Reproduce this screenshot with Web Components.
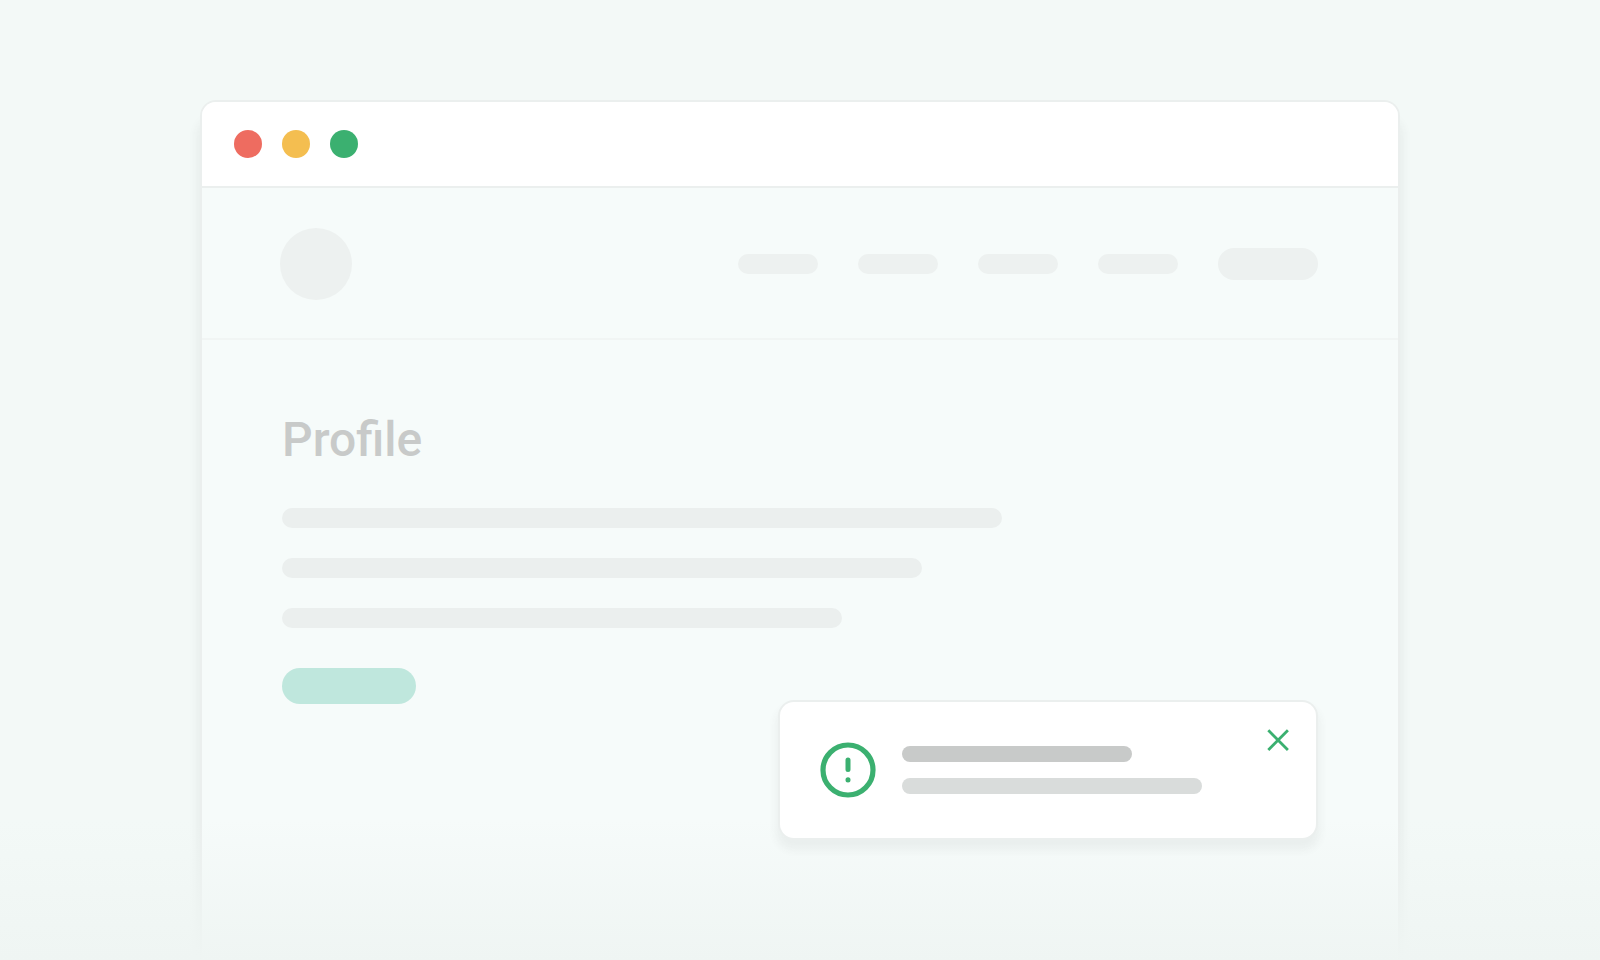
<!DOCTYPE html>
<html lang="en">
<head>
<meta charset="utf-8">
<meta name="viewport" content="width=device-width, initial-scale=1">
<title>Profile</title>
<style>
    :root {
        --page: #f3f9f7;
        --surface: #f6fbfa;
        --line: #ebefee;
        --muted: #c8cac9;
        --muted-light: #d9dcdb;
        --green: #3bb070;
        --mint: #bfe7dd;
    }

    body {
        margin: 0;
        background: var(--page);
        font-family: Roboto, "Liberation Sans", sans-serif;
    }
</style>
</head>
<body>
<profile-scene>
    <browser-window>
        <site-header></site-header>
        <profile-page>Profile</profile-page>
        <alert-toast slot="toast"></alert-toast>
    </browser-window>
</profile-scene>

<script>
/**
 * SkeletonBar: rounded placeholder, sized by attributes
 */
class SkeletonBar extends HTMLElement {
    constructor() {
        super();
        this.attachShadow({ mode: 'open' });
    }

    connectedCallback() {
        const width = this.getAttribute('width');
        const height = this.getAttribute('height') || 20;
        this.shadowRoot.innerHTML = `
        <style>
            :host {
                display: block;
                box-sizing: border-box;
                width: ${width}px;
                max-width: 100%;
                height: ${height}px;
                border-radius: 36px;
                background: var(--bar-color, var(--line));
            }
        </style>
        `;
    }
}
customElements.define('skeleton-bar', SkeletonBar);

/**
 * ProfileScene: backdrop with the fade along the bottom edge
 */
class ProfileScene extends HTMLElement {
    constructor() {
        super();
        this.attachShadow({ mode: 'open' });
    }

    connectedCallback() {
        this.shadowRoot.innerHTML = `
        <style>
            :host {
                display: flex;
                position: relative;
                box-sizing: border-box;
                min-height: 100vh;
                padding: 100px 12.5% 0;
                overflow: hidden;
            }

            .fade {
                position: absolute;
                inset: auto 0 0 0;
                height: 140px;
                background: linear-gradient(rgba(239, 245, 243, 0), #eff5f3);
                pointer-events: none;
            }
        </style>
        <slot></slot>
        <div class="fade"></div>
        `;
    }
}
customElements.define('profile-scene', ProfileScene);

/**
 * BrowserWindow: title bar with the three dots, content below
 */
class BrowserWindow extends HTMLElement {
    constructor() {
        super();
        this.attachShadow({ mode: 'open' });
    }

    connectedCallback() {
        this.shadowRoot.innerHTML = `
        <style>
            :host {
                display: flex;
                flex: 1;
                flex-direction: column;
                position: relative;
                box-sizing: border-box;
                min-width: 0;
                border: 2px solid var(--line);
                border-bottom: 0;
                border-radius: 16px 16px 0 0;
                background: var(--surface);
                box-shadow: 0 20px 8px 4px rgba(60, 60, 60, 0.05);
            }

            .bar {
                display: flex;
                align-items: center;
                gap: 20px;
                height: 84px;
                padding: 0 32px;
                border-bottom: 2px solid var(--line);
                border-radius: 14px 14px 0 0;
                background: #fff;
            }

            .dot {
                width: 28px;
                height: 28px;
                border-radius: 50%;
            }

            .red { background: #ee6c60; }
            .yellow { background: #f4be50; }
            .green { background: var(--green); }

            .toast {
                position: absolute;
                right: 82px;
                bottom: 122px;
                z-index: 2;
            }
        </style>
        <div class="bar">
            <div class="dot red"></div>
            <div class="dot yellow"></div>
            <div class="dot green"></div>
        </div>
        <slot></slot>
        <div class="toast"><slot name="toast"></slot></div>
        `;
    }
}
customElements.define('browser-window', BrowserWindow);

/**
 * SiteHeader: avatar on the left, nav placeholders on the right
 */
class SiteHeader extends HTMLElement {
    constructor() {
        super();
        this.attachShadow({ mode: 'open' });
    }

    connectedCallback() {
        this.shadowRoot.innerHTML = `
        <style>
            :host {
                display: flex;
                align-items: center;
                justify-content: space-between;
                padding: 40px 80px 38px 78px;
                border-bottom: 2px solid #f1f5f4;
            }

            .avatar {
                width: 72px;
                height: 72px;
                border-radius: 50%;
                background: #edf1f0;
            }

            nav {
                --bar-color: #edf1f0;
                display: flex;
                align-items: center;
                gap: 40px;
            }
        </style>
        <div class="avatar"></div>
        <nav>
            <skeleton-bar width="80"></skeleton-bar>
            <skeleton-bar width="80"></skeleton-bar>
            <skeleton-bar width="80"></skeleton-bar>
            <skeleton-bar width="80"></skeleton-bar>
            <skeleton-bar width="100" height="32"></skeleton-bar>
        </nav>
        `;
    }
}
customElements.define('site-header', SiteHeader);

/**
 * ProfilePage: heading, lines of copy and the main button
 */
class ProfilePage extends HTMLElement {
    constructor() {
        super();
        this.attachShadow({ mode: 'open' });
    }

    connectedCallback() {
        this.shadowRoot.innerHTML = `
        <style>
            :host {
                display: block;
                padding: 72px 80px 240px;
            }

            h1 {
                margin: 0 0 40px;
                color: var(--muted);
                font-size: 48px;
                font-weight: 500;
                line-height: 56px;
            }

            .lines {
                display: grid;
                gap: 30px;
                margin-bottom: 40px;
            }

            button {
                display: block;
                width: 134px;
                height: 36px;
                border: 0;
                border-radius: 18px;
                background: var(--mint);
                cursor: pointer;
            }
        </style>
        <h1><slot></slot></h1>
        <div class="lines">
            <skeleton-bar width="720"></skeleton-bar>
            <skeleton-bar width="640"></skeleton-bar>
            <skeleton-bar width="560"></skeleton-bar>
        </div>
        <button type="button" aria-label="Save"></button>
        `;
    }
}
customElements.define('profile-page', ProfilePage);

/**
 * AlertToast: notice with an icon and a close button
 */
class AlertToast extends HTMLElement {
    constructor() {
        super();
        this.attachShadow({ mode: 'open' });
    }

    connectedCallback() {
        this.shadowRoot.innerHTML = `
        <style>
            :host {
                display: flex;
                align-items: center;
                gap: 26px;
                box-sizing: border-box;
                width: 536px;
                height: 136px;
                padding: 0 22px 0 40px;
                border-radius: 14px;
                background: #fff;
                box-shadow: 0 0 0 2px var(--line), 0 8px 8px 4px rgba(60, 60, 60, 0.06);
            }

            svg {
                display: block;
                fill: none;
                stroke: var(--green);
            }

            .copy {
                --bar-color: var(--muted);
                display: grid;
                flex: 1;
                gap: 16px;
            }

            .soft { --bar-color: var(--muted-light); }

            button {
                align-self: flex-start;
                margin-top: 22px;
                padding: 0;
                border: 0;
                background: none;
                cursor: pointer;
            }
        </style>
        <svg width="56" height="56" viewBox="0 0 56 56">
            <circle cx="28" cy="28" r="25" stroke-width="5.2"/>
            <path d="M28 18v9.5M28 37.8v.2" stroke-width="5" stroke-linecap="round"/>
        </svg>
        <div class="copy">
            <skeleton-bar width="230" height="16"></skeleton-bar>
            <skeleton-bar class="soft" width="300" height="16"></skeleton-bar>
        </div>
        <button type="button" aria-label="Close">
            <svg width="32" height="32" viewBox="0 0 32 32">
                <path d="M6.3 6.3l19.6 19.6M25.9 6.3L6.3 25.9" stroke-width="2.8"/>
            </svg>
        </button>
        `;
    }
}
customElements.define('alert-toast', AlertToast);
</script>
</body>
</html>
